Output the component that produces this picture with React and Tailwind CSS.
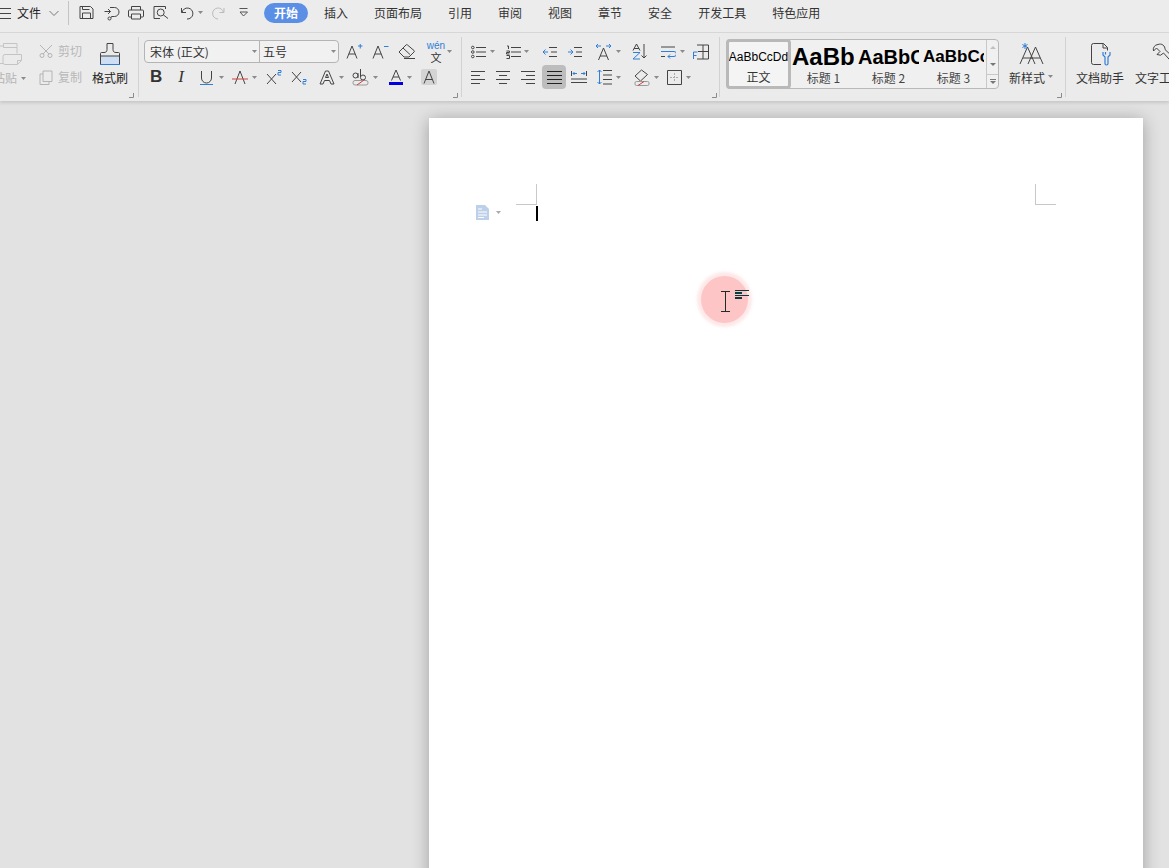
const Caret = ({ className = '' }) => (
  <svg width="5" height="3" viewBox="0 0 5 3" className={'shrink-0 ' + className}><path d="M0 0h5L2.500 3z" fill="#8a8a8a" /></svg>
);

// all toolbar drawings share the same stroke
const Ico = ({ w = 16, h = 16, className = '', children }) => (
  <svg width={w} height={h} viewBox={`0 0 ${w} ${h}`} fill="none" stroke="#444" strokeWidth="1" className={'shrink-0 ' + className}>{children}</svg>
);

const BLUE = '#2f7fd8';

const Launcher = ({ className = '' }) => (
  <svg width="5" height="5" viewBox="0 0 5 5" className={'absolute ' + className}><path d="M4.500 0v4.500H0" fill="none" stroke="#8a8a8a" /></svg>
);

const Sep = () => <div className="w-px my-[4px] bg-[#d2d2d2] shrink-0" />;

const Lines = ({ rows }) => rows.map(([x1, x2, y], i) => <path key={i} d={`M${x1} ${y}H${x2}`} />);

const Tab = ({ children }) => <span className="ml-[26px] first:ml-[16px]">{children}</span>;

function TopBar() {
  return (
    <div className="h-[33px] flex items-start pt-[3px] border-b border-[#d8d8d8] bg-[#ececec] text-[12px] text-[#333]">
      <Ico w={11} h={20}>
        <Lines rows={[[0, 11, 5.5], [0, 11, 10.5], [0, 11, 15.5]]} />
      </Ico>
      <span className="ml-[6px] leading-[20px] text-[#222]">文件</span>
      <Ico w={10} h={20} className="ml-[8px]"><path d="M0.500 8l4.500 4.500L9.500 8" stroke="#777" /></Ico>
      <div className="ml-[9px] -mt-[2px] w-px h-[24px] bg-[#c4c4c4]" />
      <Ico w={15} h={20} className="ml-[10px]"><path d="M1 3.500h10.500L14 6v9.500H1zM3.500 15.500v-5.500h8v5.500M3.500 3.500v3h7" /></Ico>
      <Ico w={16} h={20} className="ml-[10px]">
        <path d="M0.500 8.500h6M4 6l2.500 2.500L4 11M6 4.500h4.500a4.500 4.500 0 0 1 0 9H7.500v1" />
        <circle cx="5.500" cy="15.500" r="1.500" />
      </Ico>
      <Ico w={16} h={20} className="ml-[8px]"><path d="M3.500 7V3.500h9V7M3 14H1.500a1 1 0 0 1-1-1V8a1 1 0 0 1 1-1h13a1 1 0 0 1 1 1v5a1 1 0 0 1-1 1H13M3.500 11h9v5h-9z" /></Ico>
      <Ico w={16} h={20} className="ml-[9px]"><path d="M7 15.500H1v-12h11.500V6" /><circle cx="7.700" cy="9.500" r="3.500" /><path d="M10.500 12l4.500 3.500" /></Ico>
      <Ico w={15} h={20} className="ml-[11px]"><path d="M1.500 5v4.500H6M2 9.500A5.500 5.500 0 1 1 7 16" /></Ico>
      <Caret className="ml-[3px] mt-[8px]" />
      <Ico w={14} h={20} className="ml-[8px]"><path d="M13 5v4.500H8.500M12.500 9.500A5.500 5.500 0 1 0 7 16" stroke="#bbb" /></Ico>
      <Ico w={9} h={20} className="ml-[14px]"><path d="M0.500 5.500h8M1 9h7.500L4.500 13z" stroke="#555" /></Ico>
      <span className="ml-[16px] w-[44px] h-[20px] rounded-full bg-[#5b8fe6] text-white font-bold text-center leading-[20px]">开始</span>
      <div className="flex leading-[20px]">
        <Tab>插入</Tab><Tab>页面布局</Tab><Tab>引用</Tab><Tab>审阅</Tab><Tab>视图</Tab><Tab>章节</Tab><Tab>安全</Tab><Tab>开发工具</Tab><Tab>特色应用</Tab>
      </div>
    </div>
  );
}

function ClipboardGroup() {
  return (
    <div className="relative w-[138px] shrink-0 flex">
      <div className="w-[31px] overflow-hidden shrink-0 pt-[10px]">
        <Ico w={23} h={24}>
          <g stroke="#c4c4c4">
            <path d="M3.500 .5h13.500v4H3.500zM3.500 3H0M17 4.500v6" />
            <path d="M5 11.500h16.500v6l-4 4H5a2 2 0 0 1-2-2v-6a2 2 0 0 1 2-2zM17.500 21.500v-4h4M0 20.500h3" />
          </g>
        </Ico>
        <div className="flex items-center mt-[2px] text-[12px] leading-[18px] text-[#b4b4b4]">
          <span className="-ml-[7px] whitespace-nowrap">粘贴</span><Caret className="ml-[4px]" />
        </div>
      </div>
      <div className="ml-[8px] w-[50px] shrink-0 pt-[6px] text-[12px] text-[#b8b8b8]">
        <div className="h-[23px] flex items-center">
          <Ico w={14} h={14}><g stroke="#b4b4b4"><path d="M1 1l9 9M13 1L4 10" /><circle cx="3" cy="11.500" r="2" /><circle cx="11" cy="11.500" r="2" /></g></Ico>
          <span className="ml-[5px] whitespace-nowrap">剪切</span>
        </div>
        <div className="h-[24px] mt-[3px] flex items-center">
          <Ico w={14} h={15}><g stroke="#b4b4b4"><path d="M4 1h9v10.500H4zM4 4H1v10.500h9v-3" /></g></Ico>
          <span className="ml-[5px] whitespace-nowrap">复制</span>
        </div>
      </div>
      <div className="ml-[3px] w-[36px] shrink-0 flex flex-col items-center pt-[10px]">
        <Ico w={22} h={23}>
          <path d="M1.500 13h19v8.500h-19z" fill="#cfdff3" stroke="none" />
          <path d="M8 .5h6v6c0 2 1 3 3 3h2.500a1 1 0 0 1 1 1V13h-19v-2.500a1 1 0 0 1 1-1H5c2 0 3-1 3-3zM1.500 13v8.500M20.500 13v8.500" />
          <path d="M1 21.500h20" stroke={BLUE} />
        </Ico>
        <span className="mt-[3px] text-[12px] leading-[18px] text-[#222] whitespace-nowrap">格式刷</span>
      </div>
      <Launcher className="left-[129px] top-[60px]" />
    </div>
  );
}

function FontGroup() {
  return (
    <div className="relative w-[322px] shrink-0 pt-[7px] pl-[5px]">
      <div className="h-[23px] flex items-center">
        <div className="w-[195px] h-[23px] flex border border-[#b4b4b4] rounded-[4px] bg-[#f1f1f1] text-[12px] text-[#333] shrink-0">
          <div className="w-[115px] flex items-center pl-[5px] border-r border-[#b4b4b4]"><span className="flex-1">宋体 (正文)</span><Caret className="mr-[2px]" /></div>
          <div className="flex-1 flex items-center pl-[3px]"><span className="flex-1">五号</span><Caret className="mr-[2px]" /></div>
        </div>
        <Ico w={17} h={17} className="ml-[7px]"><path d="M1 15.500L6 3l5 12.500M2.800 11h6.400" /><path d="M12 3h4.500M14.250 1v4.500" stroke={BLUE} /></Ico>
        <Ico w={17} h={17} className="ml-[9px]"><path d="M1 15.500L6 3l5 12.500M2.800 11h6.400" /><path d="M12 3.500h4.500" stroke={BLUE} /></Ico>
        <Ico w={18} h={17} className="ml-[9px]"><path d="M1 9L8 2a1 1 0 0 1 1.500 0L16 7.500a1 1 0 0 1 0 1.500l-5 5H6zM5 5l7 6.500M6 15.500h11" /></Ico>
        <div className="ml-[11px] w-[18px] h-[22px] shrink-0 flex flex-col items-center">
          <span className="text-[10px] leading-[10px] text-[#2f7fd8] font-['Liberation_Sans']">wén</span>
          <span className="text-[11px] leading-[12px] text-[#333]">文</span>
        </div>
        <Caret className="ml-[2px]" />
      </div>
      <div className="h-[24px] mt-[2px] flex items-center text-[#333] font-['Liberation_Sans']">
        <span className="ml-[6px] w-[12px] text-center text-[17px] font-bold text-[#333]">B</span>
        <span className="ml-[13px] w-[12px] text-center text-[17px] italic font-['Liberation_Serif']">I</span>
        <Ico w={15} h={17} className="ml-[12px]"><path d="M2.500 2v7a5 5 0 0 0 10 0V2" /><path d="M1 15.500h13" stroke={BLUE} /></Ico>
        <Caret className="ml-[5px]" />
        <Ico w={16} h={17} className="ml-[8px]"><path d="M3 15L8 2l5 13" /><path d="M0 10h16" stroke="#d04040" /></Ico>
        <Caret className="ml-[4px]" />
        <Ico w={16} h={16} className="ml-[9px]"><path d="M1 5l9 10M10 5L1 15" /><path d="M12 1.500h3v2h-3v2.500h3" stroke={BLUE} /></Ico>
        <Ico w={16} h={16} className="ml-[9px]"><path d="M1 3l9 10M10 3L1 13" /><path d="M12 10.500h3v2h-3V15h3" stroke={BLUE} /></Ico>
        <Ico w={16} h={17} className="ml-[12px]"><path d="M1 15L6.500 2h3L15 15h-3l-1.500-3.500h-5L4 15zM6.500 8.500L8 5l1.500 3.500z" /></Ico>
        <Caret className="ml-[4px]" />
        <Ico w={17} h={18} className="ml-[8px]">
          <path d="M1 7.500a2.500 2.500 0 1 0 5 0 2.500 2.500 0 1 0-5 0M6 5v5M8.500 1v8.500a2.500 2.500 0 1 0 2.500-2.500 2.500 2.500 0 0 0-2.500 2" />
          <rect x="1" y="12.500" width="15" height="4.500" rx="2" stroke="#999" />
          <path d="M5 17l7-5" stroke="#d04040" />
        </Ico>
        <Caret className="ml-[4px]" />
        <Ico w={16} h={17} className="ml-[10px]"><path d="M3.500 11.500L8 1l4.500 10.500M5 8h6" /><path d="M1 14.500h14" stroke="#0000e0" strokeWidth="3" /></Ico>
        <Caret className="ml-[3px]" />
        <div className="ml-[9px] w-[16px] h-[16px] rounded-[2px] bg-[#d4d4d4] flex items-center justify-center shrink-0">
          <Ico w={12} h={14}><path d="M1 13.500L6 1l5 12.500M2.800 9.500h6.400" /></Ico>
        </div>
      </div>
      <Launcher className="left-[314px] top-[60px]" />
    </div>
  );
}

function ParagraphGroup() {
  return (
    <div className="relative w-[257px] shrink-0 pt-[7px]">
      <div className="h-[23px] flex items-center">
        <Ico w={15} h={14} className="ml-[9px]"><path d="M5 2.500h10M5 7h10M5 11.500h10" /><circle cx="1.800" cy="2.500" r="1.300" /><circle cx="1.800" cy="7" r="1.300" /><circle cx="1.800" cy="11.500" r="1.300" /></Ico>
        <Caret className="ml-[4px]" />
        <Ico w={15} h={14} className="ml-[11px]"><path d="M5 2.500h10M5 7h10M5 11.500h10M1 1h1.500v3M0.500 6h3v1.500h-3V9h3M0.500 10.500h3v3h-3" /></Ico>
        <Caret className="ml-[3px]" />
        <Ico w={15} h={14} className="ml-[13px]"><path d="M7 2.500h8M9 7h6M7 11.500h8" /><path d="M3.500 4.500L1 7l2.500 2.500M1 7h5" stroke={BLUE} /></Ico>
        <Ico w={15} h={14} className="ml-[10px]"><path d="M7 2.500h8M9 7h6M7 11.500h8" /><path d="M1 7h5M3.500 4.500L6 7l-2.500 2.500" stroke={BLUE} /></Ico>
        <Ico w={17} h={18} className="ml-[13px]"><path d="M3.500 17L8.500 5l5 12M5 13h7" /><path d="M1 3h5M3 1L1 3l2 2M11 3h5M14 1l2 2-2 2" stroke={BLUE} /></Ico>
        <Caret className="ml-[4px]" />
        <Ico w={15} h={17} className="ml-[11px]"><path d="M1 7.500L4.500 1 8 7.500M2 5.500h5" /><path d="M1 9.500h7L1 16h7" stroke={BLUE} /><path d="M12 1v14l-2.500-2.500M12 15l2.500-2.500" /></Ico>
        <Ico w={16} h={14} className="ml-[13px]"><path d="M1 2h14M1 11.500h4" /><path d="M1 6.500h13a2.500 2.500 0 0 1 0 5H8M10 9.500L8 11.500l2 2" stroke={BLUE} /></Ico>
        <Caret className="ml-[4px]" />
        <Ico w={16} h={16} className="ml-[8px]"><path d="M4 1h11.500v14H4M10 1v14M5 7.500h10" /><path d="M0.500 15V8h4M0.500 11.500h3" stroke={BLUE} /></Ico>
      </div>
      <div className="h-[24px] mt-[2px] flex items-center">
        <Ico w={15} h={14} className="ml-[9px]"><path d="M0 1.500h14M0 5.500h9M0 9.500h14M0 13.500h9" /></Ico>
        <Ico w={15} h={14} className="ml-[10px]"><path d="M0 1.500h14M3 5.500h8M0 9.500h14M3 13.500h8" /></Ico>
        <Ico w={15} h={14} className="ml-[10px]"><path d="M0 1.500h14M5 5.500h9M0 9.500h14M5 13.500h9" /></Ico>
        <div className="ml-[6px] w-[24px] h-[24px] rounded-[4px] bg-[#bdbdbd] flex items-center justify-center shrink-0">
          <Ico w={15} h={14}><path d="M0 1.500h15M0 5.500h15M0 9.500h15M0 13.500h15" stroke="#222" /></Ico>
        </div>
        <Ico w={16} h={14} className="ml-[5px]"><path d="M0 12.500h16M0 9h16M0.500 1v5M15.500 1v5" /><path d="M2 3.500h4M3.500 2L2 3.500 3.500 5M10 3.500h4M12.500 2L14 3.500 12.500 5" stroke={BLUE} /></Ico>
        <Ico w={15} h={16} className="ml-[10px]"><path d="M6 1.500h9M6 6h9M6 10.500h9M6 15h9" /><path d="M2.500 1v14M0.500 3L2.500 1l2 2M0.500 13l2 2 2-2" stroke={BLUE} /></Ico>
        <Caret className="ml-[4px]" />
        <Ico w={16} h={17} className="ml-[13px]"><path d="M7.500 1L1 7l5.500 5 7-6.500z" /><rect x="1" y="12.500" width="14" height="4" rx="1.500" stroke="#999" /><path d="M4 16.500l6-4" stroke="#d04040" /></Ico>
        <Caret className="ml-[4px]" />
        <Ico w={15} h={15} className="ml-[8px]"><path d="M0.500 0.500h14v14H0.500z" /><path d="M7.500 3v9M3 7.500h9" stroke="#aaa" strokeDasharray="2 1" /></Ico>
        <Caret className="ml-[4px]" />
      </div>
      <Launcher className="left-[250px] top-[60px]" />
    </div>
  );
}

const Style = ({ label, text, sample, clip }) => (
  <div className="w-[65px] shrink-0 flex flex-col items-center">
    <div className={'h-[29px] pt-[4px] flex items-center overflow-hidden whitespace-nowrap font-[\'Liberation_Sans\'] text-black ' + clip + ' ' + sample}>{text}</div>
    <div className="text-[12px] leading-[18px] text-[#444]">{label}</div>
  </div>
);

function StylesGroup() {
  return (
    <div className="relative w-[345px] shrink-0 flex pt-[6px]">
      <div className="ml-[6px] w-[273px] h-[50px] flex border border-[#b8b8b8] rounded-[4px] bg-[#f0f0f0]">
        <div className="w-[65px] shrink-0 -my-px -ml-px flex flex-col items-center border-[3px] border-[#b9b9b9] rounded-[4px] bg-[#f4f4f4] overflow-hidden">
          <div className="h-[27px] pt-[3px] flex items-center whitespace-nowrap font-['Liberation_Sans'] text-[12px] text-black">AaBbCcDd</div>
          <div className="text-[12px] leading-[18px] text-[#333]">正文</div>
        </div>
        <Style label="标题 1" text="AaBb" sample="text-[24px] font-bold" clip="w-[63px]" />
        <Style label="标题 2" text="AaBbC" sample="text-[20px] font-bold" clip="w-[61px]" />
        <Style label="标题 3" text="AaBbCc" sample="text-[17px] font-bold" clip="w-[61px]" />
        <div className="flex-1 border-l border-[#c8c8c8] flex flex-col text-[#888]">
          <div className="h-[32px] flex flex-col items-center justify-between py-[6px]">
            <svg width="6" height="3" viewBox="0 0 6 3"><path d="M3 0l3 3H0z" fill="#c0c0c0" /></svg>
            <svg width="6" height="3" viewBox="0 0 6 3"><path d="M0 0h6L3 3z" fill="#777" /></svg>
          </div>
          <div className="mt-[2px] flex-1 border-t border-[#c8c8c8] flex flex-col items-center justify-center gap-[1px]">
            <div className="w-[6px] h-px bg-[#777]" />
            <svg width="6" height="3" viewBox="0 0 6 3"><path d="M0 0h6L3 3z" fill="#777" /></svg>
          </div>
        </div>
      </div>
      <div className="ml-[6px] flex flex-col items-center w-[52px] shrink-0">
        <Ico w={25} h={23} className="mt-[3px]">
          <path d="M6 1v6M3.400 2.500l5.200 3M8.600 2.500l-5.200 3" stroke={BLUE} />
          <path d="M1 22L8.500 5 16 22M4 16h9" /><path d="M9 22L16.500 5 24 22M12 16h9" />
        </Ico>
        <div className="mt-[4px] flex items-center whitespace-nowrap text-[12px] leading-[18px] text-[#333]">新样式<Caret className="ml-[3px] -mt-[3px]" /></div>
      </div>
      <Launcher className="left-[337px] top-[60px]" />
    </div>
  );
}

function ToolsGroup() {
  return (
    <div className="flex shrink-0 text-[12px] text-[#333]">
      <div className="ml-[10px] w-[48px] flex flex-col items-center pt-[10px] shrink-0">
        <Ico w={21} h={23} className="ml-[2px]">
          <path d="M10 21.500H2.500a2 2 0 0 1-2-2V2.500a2 2 0 0 1 2-2h10l4 4v3" />
          <path d="M12 .5v4.500h4.500" />
          <path d="M12 9v3l2 2v6.500a1.500 1.500 0 0 0 3 0V14l2-2V9M14.500 9v2.500" stroke={BLUE} strokeWidth="1.200" />
        </Ico>
        <span className="mt-[3px] leading-[18px] whitespace-nowrap">文档助手</span>
      </div>
      <div className="ml-[11px] flex flex-col pt-[10px] shrink-0">
        <Ico w={26} h={23} className="ml-[17px]">
          <path d="M6 1.500A5 5 0 0 0 1.500 8L4.500 5l3.500 3.500-3 3a5 5 0 0 0 6.500-1.500L21.500 21a2.500 2.500 0 0 0 3-3.500L13 6.500A5 5 0 0 0 6 1.500z" />
        </Ico>
        <span className="mt-[3px] leading-[18px] whitespace-nowrap">文字工具</span>
      </div>
    </div>
  );
}

export default function App() {
  return (
    <div className="w-[1169px] h-[868px] overflow-hidden bg-[#e2e2e2] font-['Noto_Sans_CJK_SC','Liberation_Sans',sans-serif]">
      <TopBar />
      <div className="h-[68px] flex bg-[#ebebeb] shadow-[0_2px_3px_rgba(0,0,0,0.12)]">
        <ClipboardGroup /><Sep />
        <FontGroup /><Sep />
        <ParagraphGroup /><Sep />
        <StylesGroup />
        <Sep />
        <ToolsGroup />
      </div>
      <div className="relative ml-[429px] mt-[17px] w-[714px] h-[800px] bg-white shadow-[0_2px_16px_rgba(0,0,0,0.3)]">
        <div className="absolute left-[87px] top-[66px] w-[21px] h-[21px] border-r border-b border-[#c8c8c8]" />
        <div className="absolute left-[606px] top-[66px] w-[21px] h-[21px] border-l border-b border-[#c8c8c8]" />
        <svg width="14" height="15" viewBox="0 0 14 15" className="absolute left-[47px] top-[87px]">
          <path d="M0 0h9l4 4v11H0z" fill="#bdd0ea" />
          <path d="M2 4h4M2 7h9M2 10h9M2 12.500h6" stroke="#fff" />
        </svg>
        <svg width="5" height="3" viewBox="0 0 5 3" className="absolute left-[67px] top-[93px]"><path d="M0 0h5L2.500 3z" fill="#aaa" /></svg>
        <div className="absolute left-[107px] top-[88px] w-[2px] h-[15px] bg-black" />
        <div className="absolute left-[272px] top-[158px] w-[47px] h-[47px] rounded-full bg-[#fdc5c5] shadow-[0_0_3px_4px_rgba(253,197,197,0.4)]" />
        <svg width="10" height="21" viewBox="0 0 10 21" className="absolute left-[292px] top-[173px]"><path d="M0 .5h9M4.500 .5v20M0 20.500h9" fill="none" stroke="#1d2b2b" /></svg>
        <svg width="14" height="10" viewBox="0 0 14 10" className="absolute left-[306px] top-[172px]">
          <path d="M0 .5h14M0 5.500h14" stroke="#0d3a3d" />
          <path d="M0 2h7v2H0zM0 7h7v2H0z" fill="#0d3a3d" />
        </svg>
      </div>
    </div>
  );
}
